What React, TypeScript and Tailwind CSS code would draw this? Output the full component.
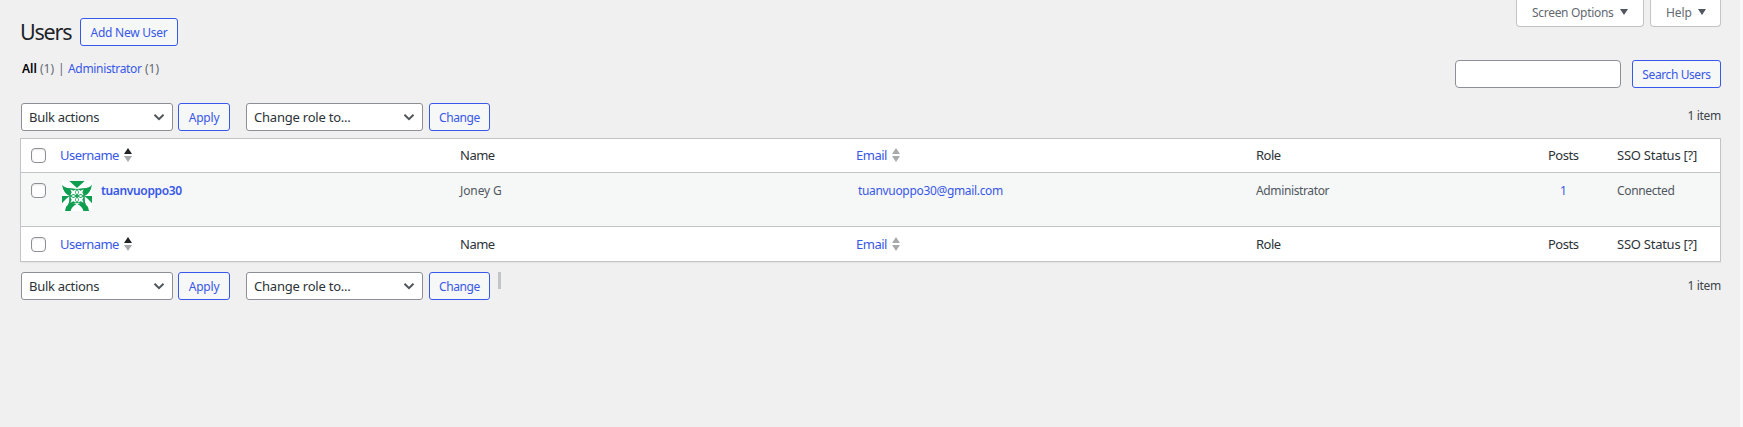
import React from "react";

const button =
  "flex h-7 items-center justify-center rounded-[3px] border border-[#3858e9] bg-[#f6f7f7] pt-[2px] text-[12px] text-[#3858e9] whitespace-nowrap";

function Chevron() {
  return (
    <svg className="mr-[7px] h-[8px] w-[12px]" viewBox="0 0 12 8" fill="none" stroke="#50555a" strokeWidth="2">
      <path d="M1.5 1.7 6 6.2l4.5-4.5" />
    </svg>
  );
}

function Select({ label, size }: { label: string; size: string }) {
  return (
    <div className={`flex h-7 items-center justify-between rounded-[3px] border border-[#8c8f94] bg-white pl-[7px] text-[13px] text-[#2c3338] ${size}`}>
      <span className="pt-[1px] whitespace-nowrap">{label}</span>
      <Chevron />
    </div>
  );
}

function TableNav({ bottom = false }: { bottom?: boolean }) {
  return (
    <div className="flex h-7 items-start pl-[1px]">
      <Select label="Bulk actions" size="w-[152px] tracking-[-0.3px]" />
      <button className={`${button} ml-[5px] w-[52px] tracking-[-0.2px]`}>Apply</button>
      <Select label="Change role to..." size="ml-4 w-[177px] tracking-[-0.22px]" />
      <button className={`${button} ml-[6px] w-[61px] tracking-[-0.4px]`}>Change</button>
      {bottom && <div className="ml-2 h-[17px] w-[3px] bg-[#c3c4c7]" />}
      <span className={`ml-auto text-[12px] leading-[18px] tracking-[-0.3px] text-[#3c434a] ${bottom ? "pt-[5px]" : "pt-[4px]"}`}>1 item</span>
    </div>
  );
}

function Checkbox() {
  return <span className="block size-[15px] rounded-[4px] border border-[#8c8f94] bg-white shadow-[inset_0_1px_2px_rgba(0,0,0,0.1)]" />;
}

function Sort({ active = false }: { active?: boolean }) {
  return (
    <svg className="-mt-px h-[14px] w-[8px]" viewBox="0 0 8 14">
      <path d="M4 0 8 6H0z" fill={active ? "#1d2327" : "#a7aaad"} />
      <path d="M0 8h8L4 14z" fill="#a7aaad" />
    </svg>
  );
}

const columns = "grid grid-cols-[39px_400px_396px_400px_271px_90px_1fr]";

function HeaderRow({ foot = false }: { foot?: boolean }) {
  return (
    <div className={`${columns} items-center bg-white text-[13px] text-[#2c3338] ${foot ? "h-[34px] pt-px" : "h-[33px]"}`}>
      <div className="pl-[10px]"><Checkbox /></div>
      <div className="flex items-center gap-[6px] text-[#3858e9]">
        <span className="w-[58px] whitespace-nowrap tracking-[-0.55px]">Username</span><Sort active />
      </div>
      <div className="tracking-[-0.5px]">Name</div>
      <div className="flex items-center gap-[6px] text-[#3858e9]">
        <span className="w-[30px] tracking-[-0.5px]">Email</span><Sort />
      </div>
      <div className="tracking-[-0.5px]">Role</div>
      <div className="pl-[21px] tracking-[-0.5px]">Posts</div>
      <div className="whitespace-nowrap tracking-[-0.25px]">SSO Status [?]</div>
    </div>
  );
}

function AvatarHalf() {
  return (
    <g fill="#0f9d50">
      <path d="M22 0h23v21z" />
      <path d="M0 11Q8 21 24 22L30 34 22 45Q4 36 0 11z" />
      <path d="M0 45H23L12 54 0 67z" />
      <path d="M23 45Q25 66 12 78L9 90H26Q28 78 44 69L30 58z" />
      <path d="M22 21h23v48H22z" />
    </g>
  );
}

function Avatar() {
  return (
    <svg className="size-[30px]" viewBox="0 0 90 90">
      <path d="M0 0h90v90H0z" fill="#fff" />
      <AvatarHalf />
      <g transform="translate(90 0) scale(-1 1)"><AvatarHalf /></g>
      <path d="M22 21h46L45 24z M33 69h24L45 66z" fill="#fff" />
      {[[34, 34], [56, 34], [34, 56], [56, 56]].map(([x, y]) => (
        <g key={`${x}-${y}`} transform={`translate(${x} ${y})`} fill="#fff">
          <path d="M-9-9 0-5 9-9 5 0 9 9 0 5-9 9-5 0z" />
        </g>
      ))}
      <g fill="#fff">
        <path d="M45 27l4 7-4 7-4-7zM45 49l4 7-4 7-4-7zM27 45l7-3 7 3-7 3zM49 45l7-3 7 3-7 3z" />
      </g>
    </svg>
  );
}

export default function App() {
  return (
    <div className="flex h-[427px] w-[1743px] overflow-hidden bg-[#f0f0f1] font-['Noto_Sans',sans-serif]">
      <main className="flex w-[1740px] flex-col pl-5 pr-[19px]">
        <div className="flex h-[60px] justify-between">
          <div className="flex items-start pt-[18px]">
            <h1 className="w-[60px] text-[21.5px] leading-[27px] tracking-[-1.2px] text-[#1d2327]">Users</h1>
            <button className={`${button} w-[98px] tracking-[-0.25px]`}>Add New User</button>
          </div>
          <div className="flex h-[27px] gap-[6px] text-[12px] leading-[25px] text-[#646970]">
            <button className="flex w-[128px] rounded-b-[4px] border border-t-0 border-[#c3c4c7] bg-white pl-[15px] tracking-[-0.3px]">
              <span className="w-[88px] text-left">Screen Options</span>
              <svg className="mt-[9px] h-[6px] w-[8px]" viewBox="0 0 8 6"><path d="M0 0h8L4 6z" fill="#50575e" /></svg>
            </button>
            <button className="flex w-[71px] rounded-b-[4px] border border-t-0 border-[#c3c4c7] bg-white pl-[15px] tracking-[-0.1px]">
              <span className="w-[32px] text-left">Help</span>
              <svg className="mt-[9px] h-[6px] w-[8px]" viewBox="0 0 8 6"><path d="M0 0h8L4 6z" fill="#50575e" /></svg>
            </button>
          </div>
        </div>
        <div className="flex h-[43px] justify-between">
          <div className="flex pl-[2px] text-[12px] leading-[18px] text-[#646970]">
            <b className="w-[18px] font-semibold text-black">All</b>
            <span className="w-[18px]">(1)</span>
            <span className="w-[10px]">|</span>
            <span className="w-[77px] tracking-[-0.33px] text-[#3858e9]">Administrator</span>
            <span>(1)</span>
          </div>
          <div className="flex">
            <input className="h-7 w-[166px] rounded-[4px] border border-[#8c8f94] bg-white" />
            <button className={`${button} ml-[11px] w-[89px] tracking-[-0.4px]`}>Search Users</button>
          </div>
        </div>
        <TableNav />
        <section className="mt-[7px] mb-[10px] h-[124px] border border-[#c3c4c7] shadow-[0_1px_1px_rgba(0,0,0,0.04)]">
          <HeaderRow />
          <div className={`${columns} h-[55px] items-start border-y border-[#c3c4c7] bg-[#f6f7f7] text-[12px] leading-[18px] text-[#50575e]`}>
            <div className="pt-[10px] pl-[10px]"><Checkbox /></div>
            <div className="flex pt-2 pl-[2px]">
              <Avatar />
              <b className="ml-[9px] pt-[1px] font-semibold tracking-[-0.35px] text-[#3858e9]">tuanvuoppo30</b>
            </div>
            <div className="pt-[9px] tracking-[-0.1px]">Joney G</div>
            <div className="pt-[9px] pl-[2px] tracking-[-0.33px] text-[#3858e9]">tuanvuoppo30@gmail.com</div>
            <div className="pt-[9px] tracking-[-0.37px]">Administrator</div>
            <div className="pt-[9px] pl-[33px] text-[#3858e9]">1</div>
            <div className="pt-[9px] tracking-[-0.35px]">Connected</div>
          </div>
          <HeaderRow foot />
        </section>
        <TableNav bottom />
      </main>
      <div className="w-[3px] bg-[#f9f9f9]" />
    </div>
  );
}
